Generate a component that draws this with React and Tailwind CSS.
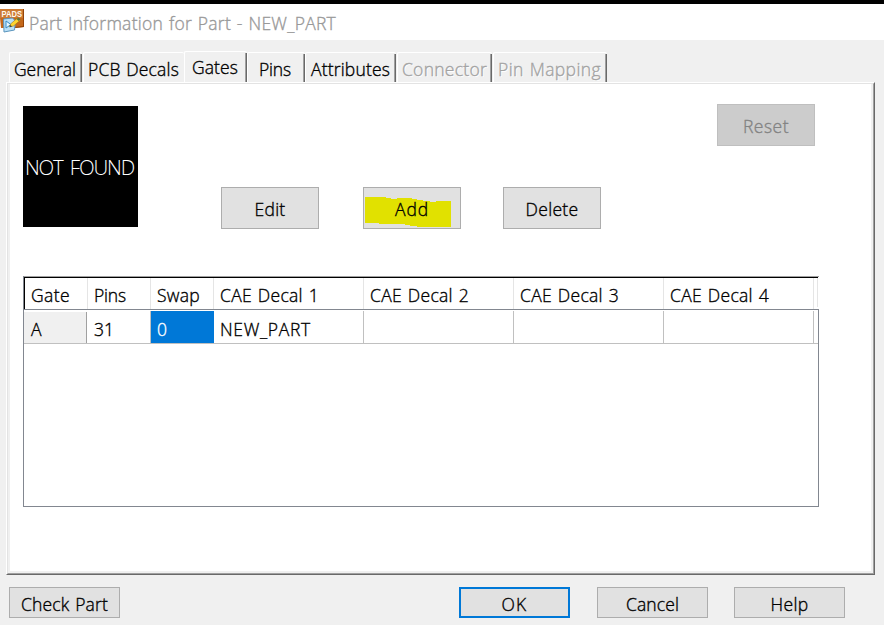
import { useLayoutEffect, useRef, useState } from "react";

// Text whose tracking is adjusted so that it fills the given width.
function Label({ text, width, className = "[-webkit-text-stroke:0.35px_currentColor]" }) {
  const ref = useRef(null);
  const [spacing, setSpacing] = useState(0);
  useLayoutEffect(() => {
    const natural = ref.current.getBoundingClientRect().width - spacing * text.length;
    setSpacing((width - natural) / text.length);
  }, [text, width]);
  return (
    <span
      ref={ref}
      className={`inline-block whitespace-pre font-light leading-6 [word-spacing:1px] ${className}`}
      style={{ letterSpacing: `${spacing}px` }}
    >
      {text}
    </span>
  );
}

function AppIcon() {
  return (
    <svg className="block h-6 w-6 overflow-visible" viewBox="0 0 24 24">
      <path d="M0 0h24v18l-9 1H1L0 9z" fill="#c5681a" />
      <path d="M0 0h23v9H0z" fill="#cc7a32" />
      <path d="M23 0h1v18l-9 1v-1l8-1z" fill="#944408" />
      <text x="1.6" y="8.300" fontSize="9" fontWeight="700" fill="#fff8ed" textLength="20.5" lengthAdjust="spacingAndGlyphs" fontFamily="Liberation Sans">PADS</text>
      <path d="M3.500 10l9-1 3 3-1 9-10.500 2z" fill="#b9e0f7" stroke="#5b95bd" strokeWidth="1" />
      <path d="M6 12v7l5-3.500z" fill="#e8f7ff" stroke="#368bc5" />
      <path d="M9.500 18l1-3 7-6 3 2-7 6z" fill="#ffd52e" stroke="#8b6714" strokeWidth=".5" />
      <path d="M16.500 10l2-1.500 2 2-2 1.500z" fill="#64733b" />
      <path d="M9.500 18l1-2 1.500 1.500z" fill="#25354c" />
    </svg>
  );
}

const tabs = [
  { text: "General", w: 62, box: "ml-[3px] w-[73px] pl-[4px]" },
  { text: "PCB Decals", w: 91, box: "ml-px w-[101px] pl-[4px]", flat: true },
  { text: "Gates", w: 46, box: "w-[63px] pl-[7px]", active: true },
  { text: "Pins", w: 32, box: "w-[58px] pl-[11px]" },
  { text: "Attributes", w: 79, box: "w-[91px] pl-[5px]" },
  { text: "Connector", w: 85, box: "ml-px w-[95px] pl-[4px]", off: true },
  { text: "Pin Mapping", w: 103, box: "ml-px w-[114px] pl-[4px]", off: true },
];

function Tab({ text, w, box, active, off, flat }) {
  return (
    <div
      className={`relative shrink-0 rounded-t-[2px] border-l border-t border-white ${box} ${
        active ? "h-[31px] pt-[2px]" : "h-[30px] pt-[3px]"
      } ${off ? "text-[#a3a3a3] [text-shadow:1px_1px_#fff]" : "text-black"}`}
    >
      <Label text={text} width={w} />
      {!flat && (
        <span className="absolute bottom-0 right-0 top-px w-[2px] border-l border-r border-l-[#a0a0a0] border-r-[#696969]" />
      )}
    </div>
  );
}

function Button({ text, w, box, className = "border border-[#adadad] bg-[#e1e1e1]" }) {
  return (
    <button className={`flex shrink-0 justify-center ${box} ${className}`}>
      <Label text={text} width={w} />
    </button>
  );
}

const columns = [
  { head: "Gate", hw: 39, value: "A", vw: 12, size: "w-[63px]" },
  { head: "Pins", hw: 32, value: "31", vw: 20, size: "w-[63px]" },
  { head: "Swap", hw: 43, value: "0", vw: 10, size: "w-[63px]" },
  { head: "CAE Decal 1", hw: 99, value: "NEW_PART", vw: 91, size: "w-[150px]" },
  { head: "CAE Decal 2", hw: 99, size: "w-[150px]" },
  { head: "CAE Decal 3", hw: 99, size: "w-[150px]" },
  { head: "CAE Decal 4", hw: 99, size: "w-[150px]" },
];

function GateTable() {
  return (
    <div className="relative h-[231px] w-[796px] border-b border-l border-[#828790]">
      <div className="flex h-[33px] w-[794px] border-l border-t-2 border-black">
        {columns.map((c) => (
          <div key={c.head} className={`shrink-0 border-r border-[#e5e5e5] pl-[6px] pt-[4px] ${c.size}`}>
            <Label text={c.head} width={c.hw} />
          </div>
        ))}
        <div className="h-[29px] w-[4px] shrink-0 border-r border-[#e5e5e5]" />
      </div>
      <div className="h-[197px] border-r border-t border-[#828790] pt-px">
        <div className="flex h-[33px] w-[794px] border-b border-[#c0c0c0] pl-px">
          {columns.map((c, i) => (
            <div
              key={c.head}
              className={`shrink-0 border-r ${c.size} ${
                i === 0
                  ? "-ml-px mr-px mt-px border-[#a0a0a0] bg-[#f0f0f0] pl-[7px] pt-[4px]"
                  : i === 2
                    ? "border-[#0078d7] bg-[#0078d7] pl-[6px] pt-[5px] text-white"
                    : "border-[#c0c0c0] pl-[6px] pt-[5px]"
              }`}
            >
              {c.value && <Label text={c.value} width={c.vw} />}
            </div>
          ))}
        </div>
      </div>
      <span className="absolute left-0 top-0 h-px w-[795px] bg-[#a0a0a0]" />
    </div>
  );
}

export default function App() {
  return (
    <div className="h-[625px] w-[884px] overflow-hidden bg-[#f0f0f0] font-['Open_Sans','Noto_Sans',sans-serif] text-[17.5px] text-black">
      <div className="h-1 bg-black" />
      <header className="flex h-9 bg-white pt-[5px] text-[#999]">
        <AppIcon />
        <div className="pl-[5px] pt-px">
          <Label text="Part Information for Part - NEW_PART" width={307} />
        </div>
      </header>
      <main className="pl-[6px] pt-[11px]">
        <nav className="flex h-[31px] items-end">
          {tabs.map((t) => (
            <Tab key={t.text} {...t} />
          ))}
        </nav>
        <section className="h-[493px] w-[869px] border border-b-[#696969] border-l-white border-r-[#696969] border-t-white">
          <div className="h-full border border-b-[#a0a0a0] border-l-[#e3e3e3] border-r-[#a0a0a0] border-t-[#e3e3e3]">
            <div className="h-full border-x-2 border-b-2 border-[#f0f0f0] bg-white pl-[13px]">
              <div className="flex h-[192px]">
                <div className="mt-[22px] flex h-[121px] w-[115px] items-center bg-black pl-[2px] text-[20.5px] text-white">
                  <Label text="NOT FOUND" width={109} className="[word-spacing:3px]" />
                </div>
                <div className="ml-[83px] mt-[103px] flex">
                  <Button text="Edit" w={31} box="h-[42px] w-[98px] pt-[9px]" />
                  <div className="relative ml-11 h-[42px] w-[98px] border border-[#adadad] bg-[#e1e1e1]">
                    <svg className="absolute left-px top-[9px] h-[31px] w-[87px]" viewBox="0 0 87 31">
                      <path d="M0 0h21v1h5v1h6V1h15v1h5v1h6v1h7v1h6V4h15v26H52v-1h-7v-1h-5v-1H14v-1H0z" fill="#e1e100" />
                    </svg>
                    <div className="relative flex justify-center pt-[9px]">
                      <Label text="Add" width={34} />
                    </div>
                  </div>
                  <Button text="Delete" w={53} box="ml-[42px] h-[42px] w-[98px] pt-[9px]" />
                </div>
                <Button
                  text="Reset"
                  w={46}
                  box="ml-[116px] mt-5 h-[42px] w-[98px] pt-[9px]"
                  className="border border-[#bfbfbf] bg-[#cccccc] text-[#838383]"
                />
              </div>
              <GateTable />
            </div>
          </div>
        </section>
        <footer className="flex pl-[3px] pt-3">
          <Button text="Check Part" w={87} box="h-[31px] w-[111px] pt-[4px]" />
          <Button
            text="OK"
            w={26}
            box="ml-[339px] h-[31px] w-[111px] pt-[3px]"
            className="border-2 border-[#0078d7] bg-[#e1e1e1]"
          />
          <Button text="Cancel" w={53} box="ml-[27px] h-[31px] w-[111px] pt-[4px]" />
          <Button text="Help" w={38} box="ml-[26px] h-[31px] w-[111px] pt-[4px]" />
        </footer>
      </main>
    </div>
  );
}
